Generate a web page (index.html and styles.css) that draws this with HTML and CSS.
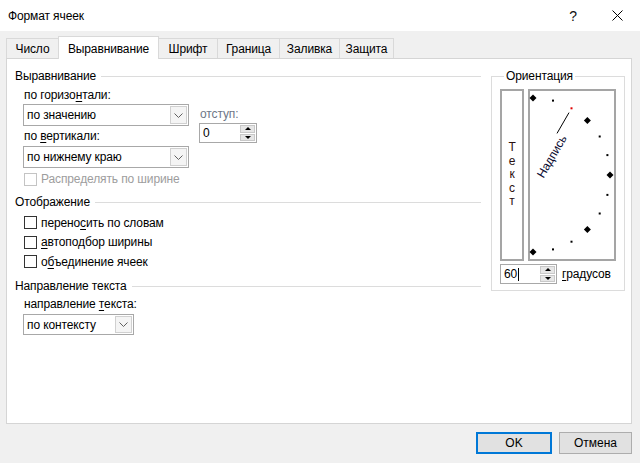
FILE: index.html
```html
<!DOCTYPE html>
<html lang="ru">
<head>
<meta charset="utf-8">
<title>Формат ячеек</title>
<link rel="stylesheet" href="styles.css">
</head>
<body>
<div class="dialog">
  <div class="titlebar">
    <span class="title">Формат ячеек</span>
    <span class="help">?</span>
    <span class="close"><svg width="11" height="11" viewBox="0 0 11 11"><path d="M0.5 0.5 L10.5 10.5 M10.5 0.5 L0.5 10.5" stroke="#000" stroke-width="1" fill="none"/></svg></span>
  </div>

  <div class="tabs">
    <div class="tab tab-number">Число</div>
    <div class="tab tab-align active">Выравнивание</div>
    <div class="tab tab-font">Шрифт</div>
    <div class="tab tab-border">Граница</div>
    <div class="tab tab-fill">Заливка</div>
    <div class="tab tab-protect">Защита</div>
  </div>

  <div class="panel">
    <div class="left">
      <div class="group-head"><span>Выравнивание</span><i class="rule"></i></div>
      <div class="align-row">
        <div class="align-col">
          <div class="label label-first">по горизо<u>н</u>тали:</div>
          <div class="combo combo-wide"><span class="combo-text">по значению</span><span class="combo-btn"><svg width="9" height="5" viewBox="0 0 9 5"><path d="M0.5 0.5 L4.5 4.5 L8.5 0.5" stroke="#606060" fill="none"/></svg></span></div>
          <div class="label label-next">по <u>в</u>ертикали:</div>
          <div class="combo combo-wide combo-next"><span class="combo-text">по нижнему краю</span><span class="combo-btn"><svg width="9" height="5" viewBox="0 0 9 5"><path d="M0.5 0.5 L4.5 4.5 L8.5 0.5" stroke="#606060" fill="none"/></svg></span></div>
        </div>
        <div class="indent-col">
          <div class="label label-disabled">отступ:</div>
          <div class="spin spin-indent">
            <span class="spin-text">0</span>
            <span class="spin-btns"><span class="spin-up"><i class="tri-up"></i></span><span class="spin-down"><i class="tri-down"></i></span></span>
          </div>
        </div>
      </div>
      <div class="check check-disabled check-distribute"><span class="box"></span><span>Распределять по ширине</span></div>

      <div class="group-head group-display"><span>Отображение</span><i class="rule"></i></div>
      <div class="checks">
        <div class="check"><span class="box"></span><span>перено<u>с</u>ить по словам</span></div>
        <div class="check"><span class="box"></span><span><u>а</u>втоподбор ширины</span></div>
        <div class="check"><span class="box"></span><span>о<u>б</u>ъединение ячеек</span></div>
      </div>

      <div class="group-head group-direction"><span>Направление текста</span><i class="rule"></i></div>
      <div class="label label-dir">направление <u>т</u>екста:</div>
      <div class="combo combo-narrow"><span class="combo-text">по контексту</span><span class="combo-btn"><svg width="9" height="5" viewBox="0 0 9 5"><path d="M0.5 0.5 L4.5 4.5 L8.5 0.5" stroke="#606060" fill="none"/></svg></span></div>
    </div>

    <fieldset class="orient">
      <legend>Ориентация</legend>
      <div class="orient-boxes">
        <div class="vtext"><span>Т</span><span>е</span><span>к</span><span>с</span><span>т</span></div>
        <div class="dial">
          <svg width="84" height="168" viewBox="0 0 84 168">
            <g fill="#000">
              <polygon points="3,3.5 6.5,7 3,10.5 -0.5,7"/>
              <polygon points="57.4,26.1 60.9,29.6 57.4,33.1 53.9,29.6"/>
              <polygon points="80,80.5 83.5,84 80,87.5 76.5,84"/>
              <polygon points="57.4,134.9 60.9,138.4 57.4,141.9 53.9,138.4"/>
              <polygon points="3,157.5 6.5,161 3,164.5 -0.5,161"/>
              <rect x="22" y="8.6" width="2" height="2"/>
              <rect x="68.7" y="44.5" width="2" height="2"/>
              <rect x="76.4" y="63.1" width="2" height="2"/>
              <rect x="76.4" y="102.9" width="2" height="2"/>
              <rect x="68.7" y="121.5" width="2" height="2"/>
              <rect x="40.5" y="149.7" width="2" height="2"/>
              <rect x="22" y="157.4" width="2" height="2"/>
            </g>
            <rect x="40.5" y="16.3" width="2" height="2" fill="#e00000"/>
            <path d="M27 42.4 L39 21.6" stroke="#000" stroke-width="1"/>
            <g transform="translate(3,84) rotate(-60)">
              <text class="dial-text" x="2" y="11">Надпись</text>
            </g>
          </svg>
        </div>
      </div>
      <div class="degrees">
        <div class="spin spin-deg">
          <span class="spin-text">60<i class="caret"></i></span>
          <span class="spin-btns"><span class="spin-up"><i class="tri-up"></i></span><span class="spin-down"><i class="tri-down"></i></span></span>
        </div>
        <span class="deg-label"><u>г</u>радусов</span>
      </div>
    </fieldset>
  </div>

  <div class="buttons">
    <button class="btn btn-default">OK</button>
    <button class="btn">Отмена</button>
  </div>
</div>
</body>
</html>
```

FILE: styles.css
```css
* { box-sizing: border-box; }
html, body { margin: 0; padding: 0; }
body {
  width: 640px;
  height: 463px;
  overflow: hidden;
  background: #f0f0f0;
  font-family: "Liberation Sans", Arial, sans-serif;
  font-size: 12px;
  letter-spacing: -0.12px;
  color: #000;
}
u { text-decoration: underline; text-underline-offset: 2px; }

.dialog { width: 640px; height: 463px; }

.titlebar {
  height: 31px;
  background: #fff;
  display: flex;
  align-items: center;
}
.title { flex: 1; padding-left: 8px; font-size: 12px; }
.help { width: 20px; text-align: center; font-size: 14px; margin-right: 11px; color: #111; }
.close { width: 46px; display: flex; justify-content: center; align-items: center; }
.close svg { display: block; }

.tabs {
  height: 28px;
  display: flex;
  align-items: flex-end;
  padding-left: 6px;
  margin-bottom: -1px;
  position: relative;
  z-index: 1;
}
.tab {
  height: 20px;
  margin-bottom: 1px;
  border: 1px solid #d9d9d9;
  border-bottom: none;
  margin-left: -1px;
  background: #f0f0f0;
  display: flex;
  justify-content: center;
  align-items: center;
  color: #000;
}
.tab:first-child { margin-left: 0; }
.tab.active {
  height: 23px;
  margin-bottom: 0;
  background: #fff;
  padding-top: 2px;
  position: relative;
  z-index: 2;
}
.tab-number { width: 53px; }
.tab-align { width: 101px; }
.tab-font { width: 60px; }
.tab-border { width: 63px; }
.tab-fill { width: 61px; }
.tab-protect { width: 55px; }

.panel {
  margin-left: 6px;
  width: 626px;
  height: 366px;
  background: #fff;
  border: 1px solid #d5d5d5;
  display: flex;
  padding-left: 8px;
}

.left { width: 466px; }

.group-head {
  display: flex;
  align-items: center;
  height: 16px;
  margin-top: 9px;
  gap: 5px;
}
.group-head .rule { flex: 1; border-top: 1px solid #dcdcdc; height: 0; }
.group-display { margin-top: 7px; }
.group-direction { margin-top: 6.5px; }

.label { line-height: 16px; height: 16px; padding-left: 1px; white-space: nowrap; }
.label-disabled { color: #6e7787; }

.align-row { display: flex; margin-left: 8px; }
.align-col { width: 166px; }
.label-first { margin-top: 3px; }
.label-next { margin-top: 2px; }

.combo {
  height: 22px;
  border: 1px solid #a8a8a8;
  background: #fff;
  display: flex;
  align-items: stretch;
  margin-top: 1px;
}
.combo-next { margin-top: 2px; }
.combo-wide { width: 166px; }
.combo-text { flex: 1; padding-left: 3px; display: flex; align-items: center; white-space: nowrap; }
.combo-btn {
  width: 17px;
  margin: 1px;
  border: 1px solid #d0d0d0;
  background: #f4f4f4;
  display: flex;
  align-items: center;
  justify-content: center;
}
.combo-btn svg { display: block; }

.indent-col { margin-left: 10px; padding-top: 22px; }
.indent-col .label { margin-bottom: 1px; }

.spin {
  height: 20px;
  border: 1px solid #a8a8a8;
  background: #fff;
  display: flex;
}
.spin-indent { width: 58px; }
.spin-text { flex: 1; padding-left: 3px; display: flex; align-items: center; }
.spin-btns {
  width: 15px;
  margin: 1px 1px 1px 0;
  display: flex;
  flex-direction: column;
  gap: 1px;
}
.spin-up, .spin-down {
  flex: 1;
  background: #e6e6e6;
  border: 1px solid #c8c8c8;
  display: flex;
  align-items: center;
  justify-content: center;
}
.tri-up, .tri-down { width: 0; height: 0; border-left: 3px solid transparent; border-right: 3px solid transparent; }
.tri-up { border-bottom: 3px solid #000; }
.tri-down { border-top: 3px solid #000; }

.check {
  display: flex;
  align-items: center;
  gap: 4px;
  margin-left: 9px;
  height: 19.5px;
  white-space: nowrap;
}
.check .box {
  width: 13px;
  height: 13px;
  border: 1px solid #333;
  background: #fff;
  flex: none;
}
.check-distribute { margin-top: 3px; height: 16px; }
.check-disabled { color: #9d9d9d; }
.check-disabled .box { border-color: #c4c4c4; }
.checks { margin-top: 3px; }

.label-dir { margin-left: 8px; margin-top: 2px; }
.combo-narrow { width: 111px; height: 21px; margin-left: 8px; margin-top: 2px; }

.orient {
  width: 134px;
  margin: 9px 0 0 10px;
  padding: 5px 0 6px 8px;
  border: 1px solid #dcdcdc;
  align-self: flex-start;
  min-width: 0;
}
.orient legend {
  padding: 0 2px;
  margin-left: 4px;
  line-height: 16px;
}
.orient-boxes { display: flex; gap: 4px; height: 172px; }
.vtext {
  width: 24px;
  border: 2px solid #a5a5a5;
  display: flex;
  flex-direction: column;
  align-items: center;
  justify-content: center;
  line-height: 13.5px;
  color: #2a1010;
}
.dial {
  width: 88px;
  border: 2px solid #a5a5a5;
}
.dial svg { display: block; overflow: visible; }
.dial-text { font-family: "Liberation Sans", Arial, sans-serif; font-size: 12px; fill: #0a0a30; }

.degrees { display: flex; align-items: center; margin-top: 3px; gap: 5px; }
.spin-deg { width: 57px; }
.caret { display: inline-block; width: 1px; height: 13px; background: #000; margin-left: 1px; }
.deg-label { white-space: nowrap; }

.buttons {
  display: flex;
  justify-content: flex-end;
  gap: 7px;
  padding-right: 8px;
  margin-top: 8px;
}
.btn {
  height: 22px;
  width: 73px;
  font: inherit;
  color: #000;
  background: #e1e1e1;
  border: 1px solid #adadad;
  padding: 0;
}
.btn-default { width: 76px; border: 2px solid #0078d7; }
```
